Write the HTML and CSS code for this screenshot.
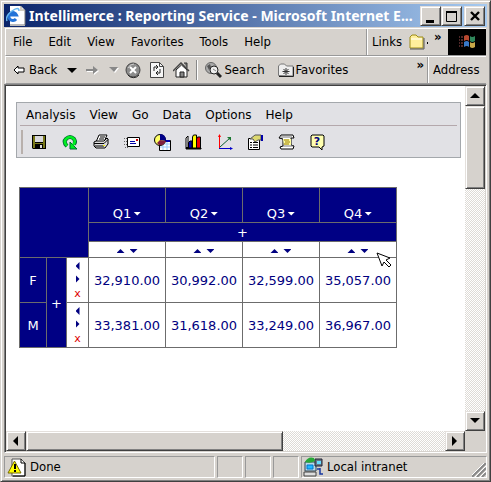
FILE: index.html
```html
<!DOCTYPE html>
<html lang="en">
<head>
<meta charset="utf-8">
<title>Intellimerce : Reporting Service</title>
<link rel="stylesheet" href="styles.css">
</head>
<body>
<div class="window">
  <header class="titlebar">
    <svg class="app-icon" width="20" height="20" viewBox="0 0 20 20"><path d="M4 0h11l4 4v16H4z" fill="#fff"/><path d="M15 0v4h4M19 4v15H4" fill="none" stroke="#777"/><path d="M14 0v5h5z" fill="#d0ccc0"/><path d="M10 13a4 4 0 1 1 .5-4H4" fill="none" stroke="#2474d8" stroke-width="3"/><path d="M1 15Q-1 10 6 5t7 0" fill="none" stroke="#68b8f0" stroke-width="1.5"/></svg>
    <h1>Intellimerce : Reporting Service - Microsoft Internet E...</h1>
    <div class="caption-buttons">
      <button class="raised" aria-label="Minimize"><svg width="16" height="16"><path d="M3 12h8v3H3z"/></svg></button>
      <button class="raised" aria-label="Maximize"><svg width="16" height="16"><path d="M2.500 3.500h10v10h-10z" fill="none" stroke="#000"/><path d="M2 3h11v2H2z"/></svg></button>
      <button class="raised close" aria-label="Close"><svg width="16" height="16"><path d="M4 4l8 8M12 4l-8 8" stroke="#000" stroke-width="2.4"/></svg></button>
    </div>
  </header>

  <div class="bar menubar">
    <nav class="menus">
      <button>File</button><button>Edit</button><button>View</button><button>Favorites</button><button>Tools</button><button>Help</button>
    </nav>
    <div class="links">
      <span>Links</span>
      <svg width="20" height="18" viewBox="0 0 20 18"><path d="M2 15V4l2-2h4l2 2h5v11z" fill="#ffef9c" stroke="#9c8c18"/><path d="M3 6h11" stroke="#fff"/><path d="M2 16h14V5" fill="none" stroke="#555"/><path d="M19 9h1v2h-1z"/></svg>
      <button class="chevron" aria-label="More links">»</button>
    </div>
    <div class="throbber"><svg width="18" height="16" viewBox="0 0 18 16"><path d="M6 2q3-2 5 0v5q-2-2-5 0z" fill="#b84830"/><path d="M12 2q2 2 5 0v5q-3 2-5 0z" fill="#30885c"/><path d="M6 8q3-2 5 0v5q-2-2-5 0z" fill="#3878c8"/><path d="M12 8q2 2 5 0v5q-3 2-5 0z" fill="#c8a848"/><path d="M1 3h1m1 0h2M1 6h1m1 0h2M1 9h1m1 0h2M1 12h1m1 0h2" stroke="#a05050"/></svg></div>
  </div>

  <div class="bar toolbar">
    <div class="tools">
      <button class="back"><svg width="12" height="10" viewBox="0 0 12 10"><path d="M1 5l4-4v2h6v4H5v2z" fill="#fff" stroke="#000"/></svg>Back</button>
      <button class="drop" aria-label="Back history"><svg width="10" height="5"><path d="M0 0h10L5 5z"/></svg></button>
      <button class="forward" aria-label="Forward"><svg width="14" height="11" viewBox="0 0 14 11"><path d="M1 5h7V2l5 4-5 4V7H1z" fill="#fff"/><path d="M0 4h7V1l5 4-5 4V6H0z" fill="#888"/></svg></button>
      <button class="drop" aria-label="Forward history"><svg width="10" height="6"><path d="M1 1h9L6 6z" fill="#fff"/><path d="M0 0h9L5 5z" fill="#888"/></svg></button>
      <button class="tool" aria-label="Stop"><svg width="17" height="17" viewBox="0 0 17 17"><circle cx="8" cy="8" r="7" fill="#8c8c8c" stroke="#444"/><path d="M3 13a7 7 0 0 0 11 0" fill="none" stroke="#222"/><path d="M5 5l6 6M11 5l-6 6" stroke="#fff" stroke-width="2"/><path d="M3 6q2-4 6-4" fill="none" stroke="#ccc"/></svg></button>
      <button class="tool" aria-label="Refresh"><svg width="14" height="16" viewBox="0 0 14 16"><path d="M.5.5h9l4 4v11H.5z" fill="#f6f6f6" stroke="#444"/><path d="M9.500 .5v4h4" fill="none" stroke="#444"/><path d="M4 9V5h4M6 3l2 2-2 2M10 7v4H6m2-2-2 2 2 2" fill="none" stroke="#222"/></svg></button>
      <button class="tool" aria-label="Home"><svg width="17" height="16" viewBox="0 0 17 16"><path d="M11 1h3v5" fill="#777" stroke="#333"/><path d="M3 8v7h11V8L8.500 3z" fill="#fff" stroke="#222"/><path d="M0 9l8-8 8 8" fill="none" stroke="#444" stroke-width="1.500"/><path d="M7 10h4v5H7z" fill="#888" stroke="#222"/></svg></button>
      <span class="divider"></span>
      <button class="labelled"><svg width="17" height="17" viewBox="0 0 17 17"><circle cx="6" cy="6" r="5.500" fill="#aaa" stroke="#666"/><path d="M2 4l3-2 1 3-2 3z" fill="#555"/><circle cx="9" cy="8" r="4" fill="#eee" stroke="#222"/><path d="M8 7l3 2" stroke="#888"/><path d="M12 11l4 4" stroke="#222" stroke-width="3"/></svg>Search</button>
      <button class="labelled"><svg width="16" height="14" viewBox="0 0 16 14"><path d="M.5 12.500V3l2-2h4l2 2H15v10z" fill="#eee" stroke="#777"/><path d="M1 13.500h14.500V4" fill="none" stroke="#222"/><path d="M8 5v7M4.500 8.500h7M5.500 6l5 5M10.500 6l-5 5" stroke="#333"/></svg>Favorites</button>
      <button class="chevron end" aria-label="More tools">»</button>
    </div>
    <div class="address">Address</div>
  </div>

  <div class="viewport">
    <main class="page">
      <section class="panel">
        <nav class="panel-menu">
          <button>Analysis</button><button>View</button><button>Go</button><button>Data</button><button>Options</button><button>Help</button>
        </nav>
        <div class="panel-tools">
          <button aria-label="Save"><svg width="16" height="16" viewBox="0 0 16 16"><path d="M1 1h14v14H2l-1-1z"/><path d="M2 2h2v7h8V2h2v12h-2v-4H4v4H2z" fill="#787818"/><path d="M4 2h8v6H4z" fill="#d8d8dc"/><path d="M9 11h2v3H9z" fill="#ddd"/></svg></button>
          <button aria-label="Refresh data"><svg width="16" height="16" viewBox="0 0 16 16"><path d="M5 12Q1 8 4 5q4-4 8 0 2 3 0 5" fill="none" stroke="#063" stroke-width="4"/><path d="M8 8v7h7z" fill="#0e2" stroke="#063"/><path d="M5 12Q1 8 4 5q4-4 8 0 2 3-1 6" fill="none" stroke="#0e2" stroke-width="2.500"/></svg></button>
          <button aria-label="Print"><svg width="16" height="16" viewBox="0 0 16 16"><path d="M6 1h8l-3 7H3z" fill="#fff" stroke="#000"/><path d="M7 3h5M6 5h5" stroke="#000"/><path d="M1 8l2-1h8l3-3 1 1v5l-3 4H3l-2-2z" fill="#ddd" stroke="#000"/><path d="M1 9.500h10l4-4M2 12h9" fill="none" stroke="#000"/><path d="M10 11h2v1h-2z" fill="#ee0"/></svg></button>
          <button aria-label="Mail"><svg width="16" height="16" viewBox="0 0 16 16"><path d="M3.500 3.500h12v9h-12z" fill="#fff" stroke="#000"/><path d="M0 4.500h3M0 7.500h3M0 10.500h3M1 13.500h3" stroke="#666" stroke-dasharray="1 1"/><path d="M6 7.500h5M6 9.500h6" stroke="#00a"/><path d="M12 5h2v2h-2z" fill="#c00"/></svg></button>
          <button aria-label="Chart and table"><svg width="17" height="17" viewBox="0 0 17 17"><path d="M5.500 6.500h11v10h-11z" fill="#fff" stroke="#000"/><path d="M6 10h10M6 13h10M9 7v9M13 7v9" stroke="#9cf"/><path d="M5 6h11v2H5z" fill="#00a"/><circle cx="6" cy="6" r="5.500" fill="#ff6" stroke="#000"/><path d="M6 0q6 0 6 7L6 6z" fill="#008"/><path d="M6 6l6 1q-2 5-7 4l-2-2z" fill="#802040"/></svg></button>
          <button aria-label="Bar chart"><svg width="17" height="16" viewBox="0 0 17 16"><path d="M1 15V4l2-2v12h13v1z" fill="#fff" stroke="#000"/><path d="M1 14h15" stroke="#000" stroke-width="2"/><path d="M3.500 8.500 5 7h2v7H3.500z" fill="#00a" stroke="#000"/><path d="M7.500 3l1-2h3v13h-4z" fill="#ff0" stroke="#000"/><path d="M11.500 5l1-2h3v11h-4z" fill="#e00" stroke="#000"/></svg></button>
          <button aria-label="Axes"><svg width="16" height="16" viewBox="0 0 16 16"><path d="M2.500 1v13" stroke="#f00"/><path d="M1 3h3l-1.500-3z" fill="#f00"/><path d="M2 14.500h12" stroke="#00c"/><path d="M13 13l3 1.500-3 1.500z" fill="#00c"/><path d="M3 13L13 4" stroke="#096030"/><path d="M10 3h4v4z" fill="#197830"/></svg></button>
          <button aria-label="Properties"><svg width="17" height="16" viewBox="0 0 17 16"><path d="M1.500 4.500h11v11h-11z" fill="#fff" stroke="#000"/><path d="M3 8.500h2m1 0h5M3 11h2m1 0h5M3 13.500h2m1 0h5" stroke="#000"/><path d="M3 5l5-4h6v5h-3L8 8 6 5z" fill="#dcd870" stroke="#555"/><path d="M14 1h2v6h-2z" fill="#00a"/></svg></button>
          <button aria-label="Script"><svg width="17" height="16" viewBox="0 0 17 16"><path d="M3 1h12l1 3h-3v7l3 1-1 3H3l-1-2 3-1V5L1 4z" fill="#fff" stroke="#000"/><path d="M5 5h8v6H6z" fill="#ffffa0"/><path d="M2 3h12M5 12h10" stroke="#777"/><path d="M6 6h5M7 8h5M6 10h5" stroke="#987800"/></svg></button>
          <button aria-label="Help topics"><svg width="15" height="17" viewBox="0 0 15 17"><path d="M2 1h11l1 1v10l-2 1v3l-3-3H2l-1-1V2z" fill="#ffffb0" stroke="#000"/><text x="7" y="11" class="question">?</text></svg></button>
        </div>
      </section>

      <div class="report">
        <table>
          <colgroup><col class="c-name"><col class="c-plus"><col class="c-sort"><col><col><col><col></colgroup>
          <thead>
            <tr class="quarters"><th colspan="3" rowspan="3"></th><th>Q1<i class="tri down"></i></th><th>Q2<i class="tri down"></i></th><th>Q3<i class="tri down"></i></th><th>Q4<i class="tri down"></i></th></tr>
            <tr class="expand"><th colspan="4">+</th></tr>
            <tr class="sorts"><td><i class="tri up"></i><i class="tri down"></i></td><td><i class="tri up"></i><i class="tri down"></i></td><td><i class="tri up"></i><i class="tri down"></i></td><td><i class="tri up"></i><i class="tri down"></i></td></tr>
          </thead>
          <tbody>
            <tr><th>F</th><th rowspan="2">+</th><td><div class="row-sort"><i class="tri left"></i><i class="tri right"></i><span>x</span></div></td><td>32,910.00</td><td>30,992.00</td><td>32,599.00</td><td>35,057.00</td></tr>
            <tr><th>M</th><td><div class="row-sort"><i class="tri left"></i><i class="tri right"></i><span>x</span></div></td><td>33,381.00</td><td>31,618.00</td><td>33,249.00</td><td>36,967.00</td></tr>
          </tbody>
        </table>
        <svg class="cursor" width="17" height="17" viewBox="0 0 17 17"><path d="M1 1l13 5-4 2 5 5-2 2-5-5-2 4z" fill="#fff" stroke="#000"/></svg>
      </div>
    </main>
    <div class="scroll vertical">
      <button class="raised" aria-label="Scroll up"><svg width="10" height="6"><path d="M5 0l5 5H0z"/></svg></button>
      <div class="raised thumb"></div>
      <button class="raised last" aria-label="Scroll down"><svg width="10" height="6"><path d="M0 0h10L5 5z"/></svg></button>
    </div>
    <div class="scroll horizontal">
      <button class="raised" aria-label="Scroll left"><svg width="6" height="10"><path d="M5 0v10L0 5z"/></svg></button>
      <div class="raised thumb"></div>
      <button class="raised last" aria-label="Scroll right"><svg width="6" height="10"><path d="M0 0v10l5-5z"/></svg></button>
    </div>
    <div class="corner"></div>
  </div>

  <footer class="status">
    <div class="cell message"><svg width="19" height="19" viewBox="0 0 19 19"><path d="M5 1h9l4 4v13H5z" fill="#fff" stroke="#555"/><path d="M14 1v4h4v13H6" fill="none" stroke="#000"/><path d="M7.500 3L14 15H1z" fill="#ff0" stroke="#776a00"/><path d="M7 6h2v5H7zM7 12h2v2H7z"/></svg>Done</div>
    <div class="cell"></div><div class="cell"></div><div class="cell"></div>
    <div class="cell zone"><svg width="20" height="20" viewBox="0 0 20 20"><path d="M2 5h11v9H2z" fill="#b8d8e8" stroke="#345"/><path d="M4 8h6v4H4z" fill="#20b8ff" stroke="#07c"/><path d="M12 2h7v7h-7z" fill="#678" stroke="#223"/><path d="M14 4h4v3h-4z" fill="#6df"/><path d="M1 15h12v4H1z" fill="#ddd" stroke="#444"/><path d="M14 12h3v5h3M17 11v6" fill="none" stroke="#1838a0" stroke-width="1.500"/><path d="M2 5q3-6 9-4l1 3q-5 3-10 1z" fill="#28a838"/></svg>Local intranet
      <svg class="grip" width="14" height="14" viewBox="0 0 14 14"><path d="M0 14L14 0M5 14l9-9M10 14l4-4" stroke="#888" stroke-width="2"/><path d="M-2 14L14-2M3 14L14 3M8 14l6-6" stroke="#fff"/></svg>
    </div>
  </footer>
</div>
</body>
</html>
```
FILE: styles.css
```css
* { box-sizing: border-box; }

body {
  margin: 0;
  font: 13px/16px "DejaVu Sans Condensed", "Liberation Sans", sans-serif;
  color: #000;
}

button {
  margin: 0;
  padding: 0;
  border: 0;
  background: none;
  font: inherit;
  color: inherit;
  display: flex;
  align-items: center;
  justify-content: center;
}

svg { display: block; flex: none; }

.window {
  display: flex;
  flex-direction: column;
  height: 100vh;
  min-height: 400px;
  padding: 2px;
  background: #d6d2cd;
  border: 1px solid;
  border-color: #d6d2cd #404040 #404040 #d6d2cd;
  box-shadow: inset 1px 1px #fff, inset -1px -1px #808080;
}

.raised {
  background: #d6d2cd;
  border: 1px solid;
  border-color: #e4e0dc #404040 #404040 #e4e0dc;
  box-shadow: inset 1px 1px #fff, inset -1px -1px #808080;
}

.titlebar {
  display: flex;
  align-items: center;
  height: 23px;
  margin: 1px;
  padding: 0 2px;
  background: linear-gradient(to right, #0a246a, #a6caf0);
  color: #fff;
}

h1 {
  flex: 1;
  min-width: 0;
  margin: 0 0 0 3px;
  overflow: hidden;
  white-space: nowrap;
  font: bold 14px/20px "Noto Sans", sans-serif;
}

.caption-buttons { display: flex; }
.caption-buttons button { width: 21px; height: 20px; }
.caption-buttons .close { margin-left: 2px; }

.bar {
  display: flex;
  margin: 0 2px;
  border-top: 1px solid #fff;
  border-left: 1px solid #fff;
  border-bottom: 1px solid #999;
  white-space: nowrap;
}

.menubar { height: 28px; }
.toolbar { height: 28px; }

.menus {
  flex: 1;
  display: flex;
  align-items: center;
  gap: 16px;
  padding-left: 7px;
}

.links {
  display: flex;
  align-items: center;
  gap: 6px;
  width: 81px;
  padding-left: 4px;
  border-left: 1px solid #fff;
  box-shadow: -1px 0 #999;
}

.chevron { align-self: flex-start; font-weight: bold; }

.throbber {
  display: flex;
  align-items: center;
  justify-content: center;
  width: 38px;
  background: #000;
}

.tools {
  flex: 1;
  display: flex;
  align-items: center;
  padding-left: 7px;
}

.back { gap: 4px; margin-right: 8px; }
.drop { width: 14px; }
.forward { width: 28px; }
.tool { width: 24px; }

.divider {
  width: 2px;
  height: 20px;
  margin: 0 7px 0 3px;
  border-left: 1px solid #888;
  border-right: 1px solid #fff;
}

.labelled { gap: 2px; margin-right: 13px; }
.end { margin: 0 4px 0 auto; }

.address {
  display: flex;
  align-items: center;
  width: 58px;
  padding-left: 4px;
  border-left: 1px solid #fff;
  box-shadow: -1px 0 #999;
}

.viewport {
  flex: 1;
  min-height: 0;
  display: grid;
  grid-template-columns: 1fr 20px;
  grid-template-rows: 1fr 20px;
  margin: 0 1px;
  border: 1px solid;
  border-color: #808080 #fff #fff #808080;
  box-shadow: inset 1px 1px #404040;
  padding: 1px;
}

.page {
  min-width: 0;
  min-height: 0;
  overflow: hidden;
  padding: 16px 4px 0 10px;
  background: #fff;
  font-family: "DejaVu Sans", sans-serif;
}

.panel {
  height: 56px;
  padding: 0 3px;
  background: #e1e1e5;
  border: 1px solid #a4a8ac;
}

.panel-menu {
  display: flex;
  align-items: center;
  gap: 14px;
  height: 23px;
  padding: 2px 6px 0;
  border-bottom: 1px solid #b4a8ac;
  font-size: 12px;
}

.panel-tools {
  display: flex;
  align-items: center;
  height: 24px;
  margin: 4px 1px;
  border-left: 2px solid #b8b0ac;
}
.panel-tools button { width: 31px; }

.question {
  font: bold 11px "DejaVu Sans", sans-serif;
  text-anchor: middle;
  fill: #000080;
}

.report { position: relative; width: max-content; margin: 29px 0 0 3px; }

table {
  width: 378px;
  table-layout: fixed;
  border-collapse: collapse;
  color: #000080;
}
.c-name { width: 27px; }
.c-plus { width: 20px; }
.c-sort { width: 22px; }

th, td {
  height: 45px;
  padding: 2px 0 0;
  border: 1px solid #6c6c6c;
  text-align: center;
  vertical-align: middle;
  font-weight: normal;
}
th { background: #000084; color: #fff; }
.quarters th { height: 35px; vertical-align: bottom; }
.expand th { height: 19px; }
.sorts td { height: 16px; line-height: 10px; }

.tri { display: inline-block; background: currentColor; }
.up, .down { width: 8px; height: 4px; vertical-align: middle; }
.up { clip-path: polygon(50% 0, 100% 100%, 0 100%); }
.down { clip-path: polygon(0 0, 100% 0, 50% 100%); }
.quarters .tri { margin: 0 0 2px 2px; }
.sorts .up { margin-right: 5px; }
.left, .right { width: 4px; height: 8px; }
.left { clip-path: polygon(100% 0, 100% 100%, 0 50%); }
.right { clip-path: polygon(0 0, 100% 50%, 0 100%); }

.row-sort {
  display: flex;
  flex-direction: column;
  align-items: center;
  gap: 5px;
}
.row-sort span { color: #d00; font-size: 11px; line-height: 12px; }

.cursor { position: absolute; left: 357px; top: 65px; }

.scroll {
  display: flex;
  background: repeating-conic-gradient(#fff 0 25%, #dedbd6 0 50%) 0 0 / 2px 2px;
}
.scroll button { flex: none; width: 20px; height: 20px; }
.scroll .last { margin: auto 0 0 auto; }
.vertical { flex-direction: column; }
.vertical .thumb { height: 24%; }
.horizontal .thumb { width: 56%; }
.corner { background: #d6d2cd; }

.status {
  display: grid;
  grid-template-columns: 1fr 26px 26px 26px 186px;
  gap: 2px;
  height: 22px;
  margin: 3px 1px 1px;
}
.cell {
  display: flex;
  align-items: center;
  gap: 4px;
  border: 1px solid;
  border-color: #999 #fff #fff #999;
  white-space: nowrap;
}
.message { padding-left: 2px; }
.zone { padding-left: 1px; }
.grip { margin: auto 0 0 auto; }
```
